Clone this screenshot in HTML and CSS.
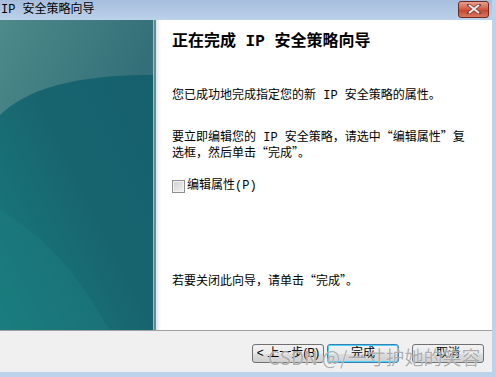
FILE: index.html
```html
<!DOCTYPE html>
<html lang="zh-CN">
<head>
    <meta charset="UTF-8">
    <title>IP 安全策略向导</title>
    <link rel="stylesheet" href="styles.css">
</head>
<body>
    <div class="window">
        <div class="titlebar">
            <span class="title">IP 安全策略向导</span>
            <button class="close-btn" aria-label="关闭">
                <svg width="16" height="10" viewBox="0 0 16 10">
                    <path d="M3 1 L13 9 M13 1 L3 9" stroke="#7a3a30" stroke-width="3.4" stroke-linecap="square"/>
                    <path d="M3 1 L13 9 M13 1 L3 9" stroke="#eeeeee" stroke-width="2"/>
                </svg>
            </button>
        </div>

        <div class="main">
            <div class="banner">
                <svg class="banner-art" width="154" height="310" viewBox="0 0 154 310" preserveAspectRatio="none">
                    <defs>
                        <linearGradient id="top" x1="0" y1="0" x2="1" y2="0.3">
                            <stop offset="0" stop-color="#4d8a8a"/>
                            <stop offset="1" stop-color="#336f78"/>
                        </linearGradient>
                        <linearGradient id="low" x1="0" y1="1" x2="1" y2="0">
                            <stop offset="0" stop-color="#1a7c7e"/>
                            <stop offset="0.5" stop-color="#17646f"/>
                            <stop offset="1" stop-color="#165f6e"/>
                        </linearGradient>
                    </defs>
                    <rect width="154" height="310" fill="url(#low)"/>
                    <path d="M0 0 H154 V55 C95 55 35 62 0 95 Z" fill="url(#top)"/>
                    <path d="M0 190 C40 215 70 240 110 310 H0 Z" fill="#1b7f80" opacity="0.4"/>
                </svg>
            </div>

            <div class="content">
                <h1 class="heading">正在完成 IP 安全策略向导</h1>
                <p class="text first">您已成功地完成指定您的新 IP 安全策略的属性。</p>
                <p class="text second">要立即编辑您的 IP 安全策略，请选中<span class="q">“</span>编辑属性<span class="q">”</span>复<br>选框，然后单击<span class="q">“</span>完成<span class="q">”</span>。</p>
                <label class="check-row">
                    <span class="checkbox"></span>
                    <span>编辑属性(P)</span>
                </label>
                <p class="text last">若要关闭此向导，请单击<span class="q">“</span>完成<span class="q">”</span>。</p>
            </div>
        </div>

        <div class="footer">
            <button class="btn">&lt; 上一步(B)</button>
            <button class="btn default">完成</button>
            <button class="btn cancel">取消</button>
            <span class="watermark">CSDN @/一寸护她的笑容</span>
        </div>
    </div>
</body>
</html>
```

FILE: styles.css
```css
body {
    margin: 0;
    font-family: "Liberation Mono", "Noto Sans CJK SC", monospace;
    font-size: 12px;
    color: #000000;
    background: #bcd3ec;
}
.window {
    width: 492px;
    height: 372px;
    border-right: 4px solid #bcd3ec;
    border-bottom: 5px solid #bcd3ec;
    display: flex;
    flex-direction: column;
    overflow: hidden;
}
.titlebar {
    height: 20px;
    flex: none;
    display: flex;
    align-items: center;
    justify-content: space-between;
    background: linear-gradient(#a6bedc, #bcd1ea);
}
.title {
    padding-left: 1px;
    font-size: 12px;
    line-height: 20px;
}
.close-btn {
    width: 31px;
    height: 17px;
    margin: 0 3px 2px 0;
    padding: 0;
    border: 1px solid #6b2a22;
    border-radius: 3px;
    background: linear-gradient(#e5a190, #d2573f 50%, #c2432a 51%, #d87860);
    display: flex;
    align-items: center;
    justify-content: center;
}
.main {
    height: 310px;
    flex: none;
    display: flex;
}
.banner {
    width: 156px;
    flex: none;
    border-right: 2px solid #5e8e96;
    box-sizing: border-box;
    background: #165f6e;
    display: flex;
}
.banner-art {
    display: block;
    border-right: 1px solid #9fbcc3;
}
.content {
    flex: 1;
    padding: 0 10px 0 16px;
    background: linear-gradient(90deg, #e2e2e2, #f7f7f7 3px, #ffffff 6px);
}
.heading {
    margin: 12px 0 0;
    font-size: 16px;
    font-weight: bold;
    line-height: 20px;
}
.text {
    margin: 0;
    line-height: 13px;
}
.q {
    font-family: "Noto Sans CJK SC", sans-serif;
}
.first {
    margin-top: 38px;
}
.second {
    margin-top: 26px;
}
.check-row {
    margin-top: 18px;
    height: 14px;
    display: flex;
    align-items: center;
    gap: 2px;
    line-height: 14px;
}
.checkbox {
    width: 11px;
    height: 11px;
    border: 1px solid #8e8f8f;
    background: linear-gradient(135deg, #cfcfcf, #f2f2f2);
    box-shadow: inset 0 0 0 1px #f4f4f4;
}
.last {
    margin-top: 80px;
}
.footer {
    flex: 1;
    position: relative;
    border-top: 1px solid #a0a0a0;
    background: #f0f0f0;
    display: flex;
    align-items: flex-start;
    justify-content: flex-end;
    padding: 13px 8px 0 0;
}
.btn {
    width: 72px;
    height: 19px;
    padding: 0;
    font-family: "Liberation Sans", "Noto Sans CJK SC", sans-serif;
    font-size: 12px;
    line-height: 17px;
    white-space: nowrap;
    border: 1px solid #707070;
    border-radius: 3px;
    background: linear-gradient(#f2f2f2, #ebebeb 50%, #dddddd 51%, #cfcfcf);
    margin-left: 3px;
}
.default {
    border-color: #3c7fb1;
    box-shadow: inset 0 0 0 1px #48d2fb;
}
.cancel {
    margin-left: 13px;
}
.watermark {
    position: absolute;
    left: 268px;
    top: 12px;
    font-family: "Noto Sans CJK SC", "Liberation Sans", sans-serif;
    font-size: 19px;
    color: rgba(120, 120, 120, 0.6);
    text-shadow: 0 0 1px #ffffff;
    white-space: nowrap;
    pointer-events: none;
}
```
